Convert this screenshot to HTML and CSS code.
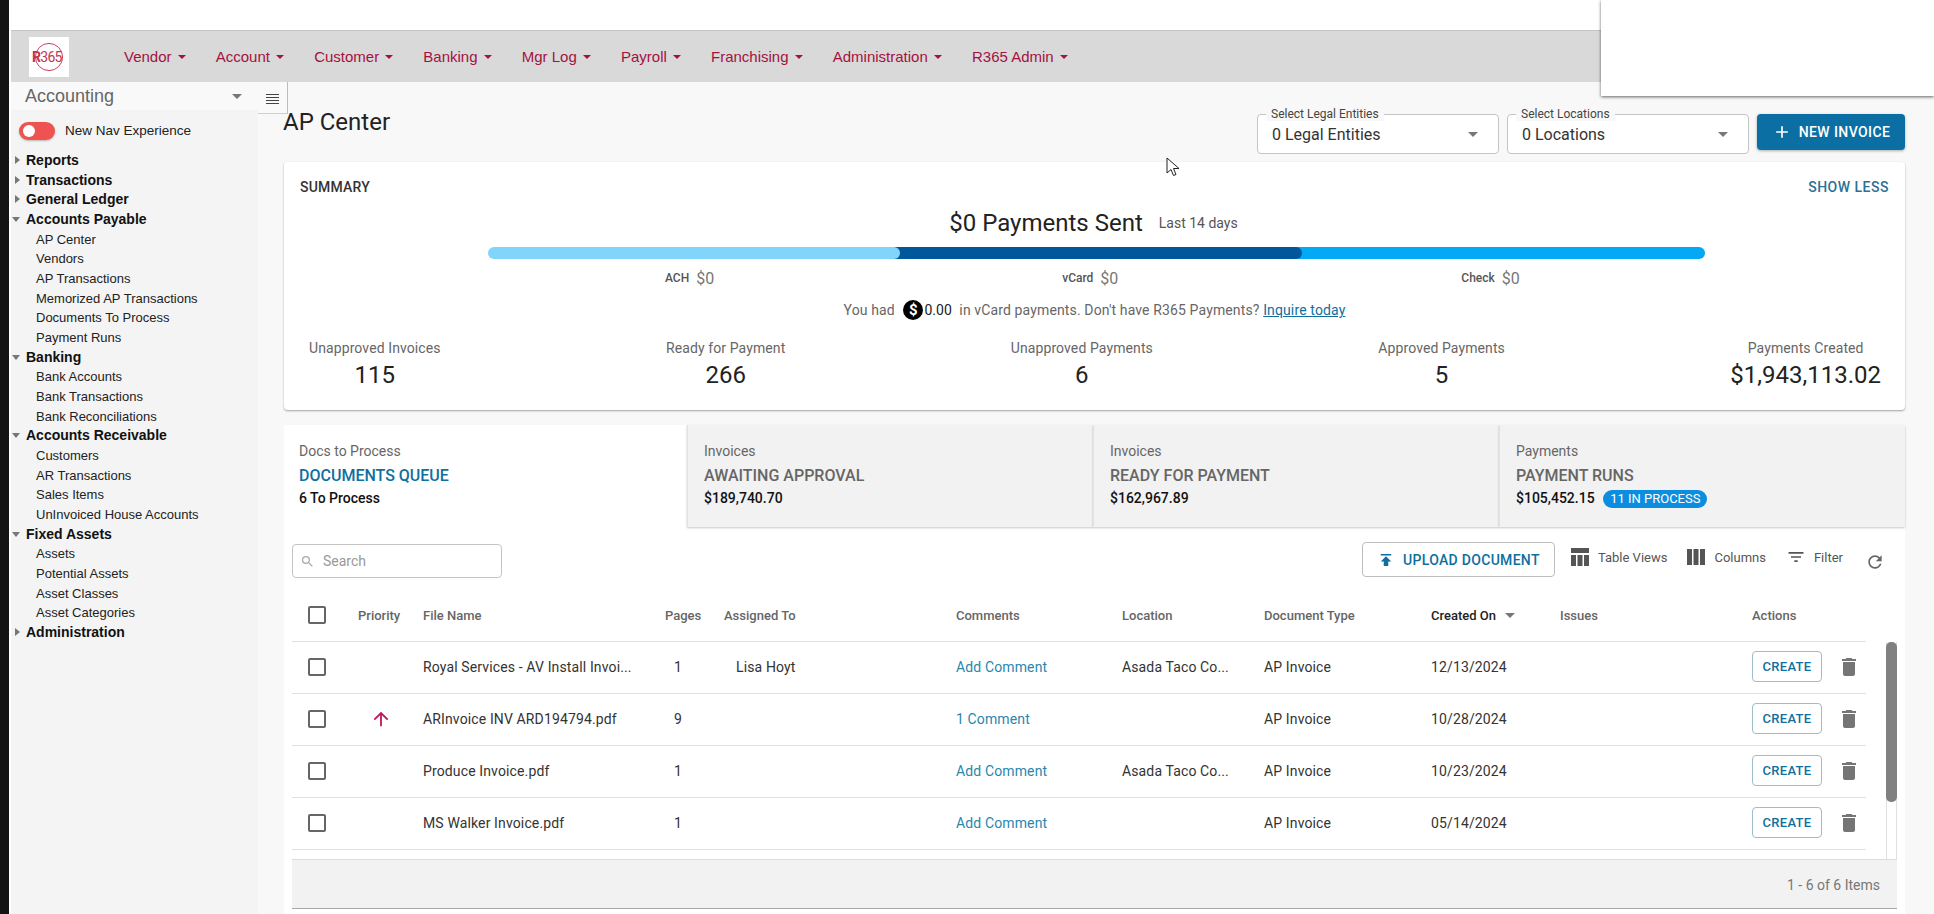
FILE: index.html
```html
<!DOCTYPE html>
<html lang="en">

<head>
    <meta charset="UTF-8" />
    <meta name="viewport" content="width=device-width, initial-scale=1" />
    <title>AP Center</title>
    <link rel="stylesheet" href="styles.css">
</head>

<body>
    <div class="edge"></div>
    <div class="app">
        <div class="top-strip"></div>
        <nav class="navbar">
            <div class="logo">
                <svg class="logo-ring" viewBox="0 0 32 32"><circle cx="16" cy="16" r="14.5" /></svg>
                <span class="logo-text"><b>R</b>365</span>
            </div>
            <ul class="nav-list">
                <li class="nav-item">Vendor<span class="caret"></span></li>
                <li class="nav-item">Account<span class="caret"></span></li>
                <li class="nav-item">Customer<span class="caret"></span></li>
                <li class="nav-item">Banking<span class="caret"></span></li>
                <li class="nav-item">Mgr Log<span class="caret"></span></li>
                <li class="nav-item">Payroll<span class="caret"></span></li>
                <li class="nav-item">Franchising<span class="caret"></span></li>
                <li class="nav-item">Administration<span class="caret"></span></li>
                <li class="nav-item">R365 Admin<span class="caret"></span></li>
            </ul>
        </nav>

        <div class="layout">
            <aside class="sidebar">
                <div class="module-select">
                    <span>Accounting</span>
                    <span class="caret caret-grey"></span>
                </div>
                <div class="nav-toggle">
                    <span class="toggle-switch"></span>
                    <span>New Nav Experience</span>
                </div>
                <ul class="tree">
                    <li class="tree-head closed">Reports</li>
                    <li class="tree-head closed">Transactions</li>
                    <li class="tree-head closed">General Ledger</li>
                    <li class="tree-head open">Accounts Payable</li>
                    <li class="tree-item">AP Center</li>
                    <li class="tree-item">Vendors</li>
                    <li class="tree-item">AP Transactions</li>
                    <li class="tree-item">Memorized AP Transactions</li>
                    <li class="tree-item">Documents To Process</li>
                    <li class="tree-item">Payment Runs</li>
                    <li class="tree-head open">Banking</li>
                    <li class="tree-item">Bank Accounts</li>
                    <li class="tree-item">Bank Transactions</li>
                    <li class="tree-item">Bank Reconciliations</li>
                    <li class="tree-head open">Accounts Receivable</li>
                    <li class="tree-item">Customers</li>
                    <li class="tree-item">AR Transactions</li>
                    <li class="tree-item">Sales Items</li>
                    <li class="tree-item">UnInvoiced House Accounts</li>
                    <li class="tree-head open">Fixed Assets</li>
                    <li class="tree-item">Assets</li>
                    <li class="tree-item">Potential Assets</li>
                    <li class="tree-item">Asset Classes</li>
                    <li class="tree-item">Asset Categories</li>
                    <li class="tree-head closed">Administration</li>
                </ul>
                <div class="menu-handle">
                    <span class="menu-lines"></span>
                </div>
            </aside>

            <main class="content">
                <header class="page-header">
                    <h1 class="page-title">AP Center</h1>
                    <div class="page-actions">
                        <div class="select-box">
                            <span class="select-label">Select Legal Entities</span>
                            <span>0 Legal Entities</span>
                            <span class="caret caret-grey"></span>
                        </div>
                        <div class="select-box">
                            <span class="select-label">Select Locations</span>
                            <span>0 Locations</span>
                            <span class="caret caret-grey"></span>
                        </div>
                        <button class="btn-primary">
                            <svg class="icon" viewBox="0 0 24 24"><path d="M19 13h-6v6h-2v-6H5v-2h6V5h2v6h6v2z" /></svg>
                            NEW INVOICE
                        </button>
                    </div>
                </header>

                <section class="summary">
                    <div class="summary-top">
                        <span class="summary-title">SUMMARY</span>
                        <span class="show-less">SHOW LESS</span>
                    </div>
                    <div class="sent-line">
                        <span class="sent-total">$0 Payments Sent</span>
                        <span class="sent-range">Last 14 days</span>
                    </div>
                    <div class="pay-bar">
                        <div class="pay-seg seg-ach"></div>
                        <div class="pay-seg seg-vcard"></div>
                        <div class="pay-seg seg-check"></div>
                    </div>
                    <div class="pay-legend">
                        <span class="legend-item legend-ach"><small>ACH</small>$0</span>
                        <span class="legend-item legend-vcard"><small>vCard</small>$0</span>
                        <span class="legend-item legend-check"><small>Check</small>$0</span>
                    </div>
                    <p class="vcard-note">
                        You had
                        <span class="dollar-badge">$</span><span class="vcard-amount">0.00</span>
                        in vCard payments. Don't have R365 Payments? <a class="inquire">Inquire today</a>
                    </p>
                    <div class="stats">
                        <div class="stat">
                            <span class="stat-label">Unapproved Invoices</span>
                            <span class="stat-value">115</span>
                        </div>
                        <div class="stat">
                            <span class="stat-label">Ready for Payment</span>
                            <span class="stat-value">266</span>
                        </div>
                        <div class="stat">
                            <span class="stat-label">Unapproved Payments</span>
                            <span class="stat-value">6</span>
                        </div>
                        <div class="stat">
                            <span class="stat-label">Approved Payments</span>
                            <span class="stat-value">5</span>
                        </div>
                        <div class="stat">
                            <span class="stat-label">Payments Created</span>
                            <span class="stat-value">$1,943,113.02</span>
                        </div>
                    </div>
                </section>

                <section class="panel">
                    <div class="tabs">
                        <div class="tab tab-active tab-docs">
                            <span class="tab-kicker">Docs to Process</span>
                            <span class="tab-name">DOCUMENTS QUEUE</span>
                            <span class="tab-meta">6 To Process</span>
                        </div>
                        <div class="tab tab-wide">
                            <span class="tab-kicker">Invoices</span>
                            <span class="tab-name">AWAITING APPROVAL</span>
                            <span class="tab-meta">$189,740.70</span>
                        </div>
                        <div class="tab tab-wide">
                            <span class="tab-kicker">Invoices</span>
                            <span class="tab-name">READY FOR PAYMENT</span>
                            <span class="tab-meta">$162,967.89</span>
                        </div>
                        <div class="tab tab-last">
                            <span class="tab-kicker">Payments</span>
                            <span class="tab-name">PAYMENT RUNS</span>
                            <span class="tab-meta">$105,452.15 <span class="pill">11 IN PROCESS</span></span>
                        </div>
                    </div>

                    <div class="toolbar">
                        <div class="search-box">
                            <svg class="icon-search" viewBox="0 0 24 24"><path d="M15.5 14h-.79l-.28-.27A6.47 6.47 0 0 0 16 9.5 6.5 6.5 0 1 0 9.5 16c1.61 0 3.09-.59 4.23-1.57l.27.28v.79l5 4.99L20.49 19l-4.99-5zm-6 0C7.01 14 5 11.99 5 9.5S7.01 5 9.5 5 14 7.01 14 9.5 11.99 14 9.5 14z" /></svg>
                            <span>Search</span>
                        </div>
                        <div class="tools">
                            <button class="btn-outline">
                                <svg class="icon" viewBox="0 0 24 24"><path d="M5 4v2h14V4H5zm0 10h4v6h6v-6h4l-7-7-7 7z" /></svg>
                                UPLOAD DOCUMENT
                            </button>
                            <span class="tool tool-views">
                                <svg class="icon-tool" viewBox="0 0 20 20"><path d="M1 1h18v5H1zM1 8h5v11H1zM7.5 8h5v11h-5zM14 8h5v11h-5z" /></svg>
                                Table Views
                            </span>
                            <span class="tool tool-columns">
                                <svg class="icon-tool" viewBox="0 0 20 20"><path d="M1 2h5v16H1zM7.5 2h5v16h-5zM14 2h5v16h-5z" /></svg>
                                Columns
                            </span>
                            <span class="tool tool-filter">
                                <svg class="icon-tool" viewBox="0 0 24 24"><path d="M10 18h4v-2h-4v2zM3 6v2h18V6H3zm3 7h12v-2H6v2z" /></svg>
                                Filter
                            </span>
                            <svg class="icon-refresh" viewBox="0 0 24 24"><path d="M17.65 6.35C16.2 4.9 14.21 4 12 4c-4.42 0-7.99 3.58-7.99 8s3.57 8 7.99 8c3.73 0 6.84-2.55 7.73-6h-2.08c-.82 2.33-3.04 4-5.65 4-3.31 0-6-2.69-6-6s2.69-6 6-6c1.66 0 3.14.69 4.22 1.78L13 11h7V4l-2.35 2.35z" /></svg>
                        </div>
                    </div>

                    <div class="grid-wrap">
                        <div class="grid-head row">
                            <span class="cell-check"><span class="checkbox"></span></span>
                            <span>Priority</span>
                            <span>File Name</span>
                            <span>Pages</span>
                            <span>Assigned To</span>
                            <span>Comments</span>
                            <span>Location</span>
                            <span>Document Type</span>
                            <span class="sorted">Created On<span class="caret caret-grey"></span></span>
                            <span>Issues</span>
                            <span>Actions</span>
                        </div>
                        <div class="grid-body">
                            <div class="rows">
                                <div class="row">
                                    <span class="cell-check"><span class="checkbox"></span></span>
                                    <span></span>
                                    <span>Royal Services - AV Install Invoi...</span>
                                    <span class="cell-pages">1</span>
                                    <span class="cell-person">Lisa Hoyt</span>
                                    <a class="cell-link">Add Comment</a>
                                    <span>Asada Taco Co...</span>
                                    <span>AP Invoice</span>
                                    <span>12/13/2024</span>
                                    <span></span>
                                    <span class="cell-actions">
                                        <button class="btn-create">CREATE</button>
                                        <svg class="icon-trash" viewBox="0 0 24 24"><path d="M6 19c0 1.1.9 2 2 2h8c1.1 0 2-.9 2-2V7H6v12zM19 4h-3.5l-1-1h-5l-1 1H5v2h14V4z" /></svg>
                                    </span>
                                </div>
                                <div class="row">
                                    <span class="cell-check"><span class="checkbox"></span></span>
                                    <span class="cell-priority">
                                        <svg class="icon-priority" viewBox="0 0 24 24"><path d="M4 12l1.41 1.41L11 7.83V20h2V7.83l5.58 5.59L20 12l-8-8-8 8z" /></svg>
                                    </span>
                                    <span>ARInvoice INV ARD194794.pdf</span>
                                    <span class="cell-pages">9</span>
                                    <span></span>
                                    <a class="cell-link">1 Comment</a>
                                    <span></span>
                                    <span>AP Invoice</span>
                                    <span>10/28/2024</span>
                                    <span></span>
                                    <span class="cell-actions">
                                        <button class="btn-create">CREATE</button>
                                        <svg class="icon-trash" viewBox="0 0 24 24"><path d="M6 19c0 1.1.9 2 2 2h8c1.1 0 2-.9 2-2V7H6v12zM19 4h-3.5l-1-1h-5l-1 1H5v2h14V4z" /></svg>
                                    </span>
                                </div>
                                <div class="row">
                                    <span class="cell-check"><span class="checkbox"></span></span>
                                    <span></span>
                                    <span>Produce Invoice.pdf</span>
                                    <span class="cell-pages">1</span>
                                    <span></span>
                                    <a class="cell-link">Add Comment</a>
                                    <span>Asada Taco Co...</span>
                                    <span>AP Invoice</span>
                                    <span>10/23/2024</span>
                                    <span></span>
                                    <span class="cell-actions">
                                        <button class="btn-create">CREATE</button>
                                        <svg class="icon-trash" viewBox="0 0 24 24"><path d="M6 19c0 1.1.9 2 2 2h8c1.1 0 2-.9 2-2V7H6v12zM19 4h-3.5l-1-1h-5l-1 1H5v2h14V4z" /></svg>
                                    </span>
                                </div>
                                <div class="row">
                                    <span class="cell-check"><span class="checkbox"></span></span>
                                    <span></span>
                                    <span>MS Walker Invoice.pdf</span>
                                    <span class="cell-pages">1</span>
                                    <span></span>
                                    <a class="cell-link">Add Comment</a>
                                    <span></span>
                                    <span>AP Invoice</span>
                                    <span>05/14/2024</span>
                                    <span></span>
                                    <span class="cell-actions">
                                        <button class="btn-create">CREATE</button>
                                        <svg class="icon-trash" viewBox="0 0 24 24"><path d="M6 19c0 1.1.9 2 2 2h8c1.1 0 2-.9 2-2V7H6v12zM19 4h-3.5l-1-1h-5l-1 1H5v2h14V4z" /></svg>
                                    </span>
                                </div>
                            </div>
                            <div class="scroll-track"><div class="scroll-thumb"></div></div>
                        </div>
                        <div class="grid-footer">1 - 6 of 6 Items</div>
                    </div>
                </section>
            </main>
        </div>
    </div>

    <div class="popup"></div>
    <svg class="cursor" viewBox="0 0 14 20"><path d="M1 1v15l4-3.5 2.5 6 2.5-1-2.5-6H13z" /></svg>
</body>
</html>
```

FILE: styles.css
```css
:root {
    --burgundy: #a3123f;
    --teal: #0f6f9e;
    --link: #2a87ad;
    --text: #333333;
    --muted: #666666;
    --line: #e0e0e0;
}

* {
    margin: 0;
    padding: 0;
    box-sizing: border-box;
}

html,
body {
    height: 914px;
    overflow: hidden;
}

body {
    display: flex;
    font-family: 'Roboto', sans-serif;
    font-size: 14px;
    color: var(--text);
    background-color: white;
}

ul {
    list-style: none;
}

button {
    font-family: inherit;
    cursor: pointer;
}

.edge {
    width: 11px;
    flex-shrink: 0;
    background-color: #141414;
    border-right: 2px solid white;
}

.app {
    flex: 1;
    min-width: 0;
    display: flex;
    flex-direction: column;
}

.top-strip {
    height: 31px;
    background-color: white;
    border-bottom: 1px solid #c4c4c4;
}

/* top nav */

.navbar {
    height: 51px;
    display: flex;
    align-items: center;
    background-color: #d9d9d9;
}

.logo {
    position: relative;
    width: 40px;
    height: 40px;
    margin-left: 18px;
    background-color: white;
}

.logo-ring {
    position: absolute;
    top: 5px;
    left: 5px;
    width: 30px;
    height: 30px;
    fill: none;
    stroke: #c4344f;
    stroke-width: 1;
}

.logo-text {
    position: absolute;
    top: 12px;
    left: 3px;
    font-size: 14px;
    line-height: 16px;
    letter-spacing: -0.7px;
    color: #c4344f;
}

.nav-list {
    display: flex;
    gap: 30.2px;
    margin-left: 55px;
}

.nav-item {
    display: flex;
    align-items: center;
    gap: 6px;
    font-family: 'Liberation Sans', sans-serif;
    font-size: 15px;
    color: var(--burgundy);
    white-space: nowrap;
}

.caret {
    display: inline-block;
    width: 0;
    height: 0;
    border-left: 4px solid transparent;
    border-right: 4px solid transparent;
    border-top: 4px solid var(--burgundy);
}

.caret-grey {
    border-left-width: 5px;
    border-right-width: 5px;
    border-top: 5px solid #777777;
}

/* sidebar */

.layout {
    flex: 1;
    min-height: 0;
    display: flex;
}

.sidebar {
    position: relative;
    width: 247px;
    flex-shrink: 0;
    font-family: 'Liberation Sans', sans-serif;
    background-color: #f4f4f4;
}

.module-select {
    height: 28px;
    display: flex;
    align-items: center;
    justify-content: space-between;
    padding: 0 16px 0 14px;
    font-size: 18px;
    color: #666666;
    background-color: #f9f9f9;
}

.menu-handle {
    position: absolute;
    top: 0;
    left: 100%;
    width: 30px;
    height: 32px;
    display: flex;
    align-items: center;
    justify-content: center;
    border-right: 1px solid #bdbdbd;
    border-bottom: 1px solid #cfcfcf;
    background-color: #f9f9f9;
}

.menu-lines {
    width: 13px;
    height: 12px;
    margin-top: 4px;
    background: repeating-linear-gradient(to bottom, #444444 0, #444444 1.5px, transparent 1.5px, transparent 3px);
}

.nav-toggle {
    display: flex;
    align-items: center;
    gap: 10px;
    height: 41px;
    padding-left: 8px;
    font-size: 13.5px;
    color: #222222;
}

.toggle-switch {
    position: relative;
    width: 36px;
    height: 18px;
    background-color: #ef5350;
    border-radius: 9px;
    box-shadow: 0 1px 2px rgba(0, 0, 0, 0.25);
}

.toggle-switch::before {
    content: '';
    position: absolute;
    top: 3px;
    left: 4px;
    width: 12px;
    height: 12px;
    border-radius: 50%;
    background-color: white;
}

.tree li {
    height: 19.68px;
    line-height: 19.68px;
    white-space: nowrap;
}

.tree-head {
    position: relative;
    padding-left: 15px;
    font-size: 14px;
    font-weight: 700;
    color: #111111;
}

.tree-head::before {
    content: '';
    position: absolute;
    width: 0;
    height: 0;
}

.tree-head.closed::before {
    border-top: 4.5px solid transparent;
    border-bottom: 4.5px solid transparent;
    border-left: 5px solid #777777;
    left: 4px;
    top: 5px;
}

.tree-head.open::before {
    border-left: 4.5px solid transparent;
    border-right: 4.5px solid transparent;
    border-top: 5px solid #777777;
    left: 1px;
    top: 7px;
}

.tree-item {
    padding-left: 25px;
    font-size: 13px;
    color: #222222;
}

/* main */

.content {
    flex: 1;
    min-width: 0;
    padding: 0 29px 0 26px;
    background-color: #f8f8f8;
}

.page-header {
    height: 80px;
    display: flex;
    justify-content: space-between;
}

.page-title {
    margin: 24px 0 0 -1px;
    font-size: 24px;
    font-weight: 400;
    line-height: 32px;
    color: #222222;
}

.page-actions {
    display: flex;
    gap: 8px;
    padding-top: 32px;
}

.select-box {
    position: relative;
    width: 242px;
    height: 40px;
    display: flex;
    align-items: center;
    justify-content: space-between;
    padding: 0 20px 0 14px;
    font-size: 16px;
    color: #333333;
    background-color: white;
    border: 1px solid #c4c4c4;
    border-radius: 4px;
}

.select-label {
    position: absolute;
    top: -8px;
    left: 8px;
    padding: 0 5px;
    font-size: 12px;
    line-height: 14px;
    color: #444444;
    background-color: #f8f8f8;
}

.btn-primary {
    width: 148px;
    height: 36px;
    display: flex;
    align-items: center;
    justify-content: center;
    gap: 7px;
    font-size: 14px;
    font-weight: 500;
    letter-spacing: 0.4px;
    color: white;
    background-color: #0b6fa4;
    border: none;
    border-radius: 4px;
    box-shadow: 0 1px 3px rgba(0, 0, 0, 0.3);
}

.icon {
    width: 20px;
    height: 20px;
    fill: currentColor;
    flex-shrink: 0;
}

/* summary card */

.summary {
    height: 248px;
    padding: 16px 16px 0 16px;
    background-color: white;
    border-radius: 4px;
    box-shadow: 0 1px 2px rgba(0, 0, 0, 0.35);
}

.summary-top {
    display: flex;
    justify-content: space-between;
    font-size: 14px;
    line-height: 18px;
    font-weight: 500;
    letter-spacing: 0.2px;
}

.summary-title {
    color: #333333;
}

.show-less {
    letter-spacing: 0.5px;
    color: #2c7096;
}

.sent-line {
    display: flex;
    align-items: center;
    justify-content: center;
    gap: 16px;
    margin-top: 11px;
    padding-right: 2px;
    line-height: 32px;
}

.sent-total {
    font-size: 24px;
    color: #222222;
}

.sent-range {
    font-size: 14px;
    color: #555555;
}

.pay-bar {
    position: relative;
    z-index: 0;
    display: flex;
    height: 12px;
    margin: 8px 184px 0 188px;
}

.pay-seg {
    height: 100%;
}

.seg-ach {
    position: relative;
    z-index: 2;
    width: 412px;
    background-color: #81d4fa;
    border-radius: 6px;
}

.seg-vcard {
    position: relative;
    z-index: 1;
    width: 408px;
    margin-left: -6px;
    background-color: #01579b;
    border-radius: 0 6px 6px 0;
}

.seg-check {
    flex: 1;
    margin-left: -6px;
    background-color: #03a9f4;
    border-radius: 0 6px 6px 0;
}

.pay-legend {
    display: flex;
    height: 20px;
    margin-top: 9px;
    font-size: 16px;
    color: #777777;
}

.legend-item {
    display: inline-flex;
    align-items: center;
    gap: 7px;
}

.legend-item small {
    font-size: 12px;
    font-weight: 500;
    color: #555555;
}

.legend-ach {
    margin-left: 365px;
}

.legend-vcard {
    margin-left: 348px;
}

.legend-check {
    margin-left: 343px;
}

.vcard-note {
    margin-top: 12px;
    line-height: 20px;
    font-size: 14px;
    letter-spacing: 0.13px;
    text-align: center;
    color: #666666;
    white-space: nowrap;
}

.dollar-badge {
    display: inline-block;
    width: 20px;
    height: 20px;
    margin-left: 5px;
    font-size: 15px;
    font-weight: 700;
    line-height: 20px;
    vertical-align: top;
    color: white;
    background-color: black;
    border-radius: 50%;
}

.vcard-amount {
    margin: 0 4px 0 1px;
    letter-spacing: 0;
    color: #222222;
}

.inquire {
    color: var(--teal);
    text-decoration: underline;
}

.stats {
    display: flex;
    justify-content: space-between;
    margin-top: 18px;
    padding: 0 8px 0 9px;
}

.stat {
    display: flex;
    flex-direction: column;
    align-items: center;
}

.stat-label {
    line-height: 20px;
    letter-spacing: 0.1px;
    color: #666666;
}

.stat-value {
    margin-top: 1px;
    font-size: 24px;
    line-height: 32px;
    color: #222222;
}

/* tabs and table */

.panel {
    height: 500px;
    margin-top: 15px;
    background-color: white;
    border-radius: 4px 4px 0 0;
}

.tabs {
    height: 102px;
    display: flex;
}

.tab {
    display: flex;
    flex-direction: column;
    padding: 16px 16px 0 16px;
    background-color: #f2f2f2;
    border-left: 1px solid #e2e2e2;
    box-shadow: 0 1px 2px rgba(0, 0, 0, 0.22);
}

.tab-active {
    padding-left: 15px;
    background-color: white;
    border-left: none;
    box-shadow: none;
}

.tab-docs {
    width: 403px;
}

.tab-wide {
    width: 406px;
}

.tab-last {
    flex: 1;
}

.tab-kicker {
    font-size: 14px;
    line-height: 20px;
    color: #666666;
}

.tab-name {
    margin-top: 4px;
    font-size: 16px;
    line-height: 22px;
    font-weight: 500;
    color: #666666;
}

.tab-active .tab-name {
    color: var(--teal);
}

.tab-meta {
    margin-top: 1px;
    font-size: 14px;
    line-height: 20px;
    font-weight: 500;
    color: #111111;
}

.pill {
    display: inline-block;
    margin-left: 5px;
    padding: 0 7px;
    font-size: 13px;
    line-height: 18px;
    font-weight: 400;
    color: white;
    background-color: #0b8de0;
    border-radius: 9px;
}

.toolbar {
    height: 66px;
    display: flex;
    justify-content: space-between;
    padding: 15px 20px 0 8px;
}

.search-box {
    width: 210px;
    height: 34px;
    margin-top: 2px;
    display: flex;
    align-items: center;
    gap: 8px;
    padding-left: 7px;
    font-size: 14px;
    color: #999999;
    border: 1px solid #c4c4c4;
    border-radius: 4px;
}

.icon-search {
    width: 15px;
    height: 15px;
    fill: #aaaaaa;
}

.tools {
    display: flex;
    align-items: flex-start;
}

.btn-outline {
    width: 193px;
    height: 35px;
    display: flex;
    align-items: center;
    justify-content: center;
    gap: 8px;
    font-size: 14px;
    font-weight: 500;
    letter-spacing: 0.3px;
    color: var(--teal);
    background-color: white;
    border: 1px solid #bdbdbd;
    border-radius: 4px;
}

.btn-outline .icon {
    width: 18px;
    height: 18px;
}

.tool {
    display: flex;
    align-items: center;
    gap: 8px;
    height: 30px;
    font-size: 13px;
    color: #555555;
}

.tool-views {
    margin-left: 15px;
}

.tool-columns {
    margin-left: 19px;
}

.tool-filter {
    margin-left: 20px;
}

.icon-tool {
    width: 20px;
    height: 20px;
    fill: #555555;
}

.icon-refresh {
    width: 20px;
    height: 20px;
    margin: 10px 0 0 22px;
    fill: #666666;
}

.grid-wrap {
    margin: 0 8px;
}

.row {
    display: grid;
    grid-template-columns: 66px 65px 242px 59px 232px 166px 142px 167px 129px 192px 114px;
    align-items: center;
    width: 1574px;
    height: 52px;
    padding-bottom: 1px;
    letter-spacing: 0.13px;
    border-bottom: 1px solid var(--line);
}

.grid-head {
    height: 49px;
    padding-bottom: 4px;
    font-size: 13px;
    font-weight: 500;
    letter-spacing: 0;
    color: #666666;
}

.sorted {
    display: flex;
    align-items: center;
    gap: 9px;
    color: #222222;
}

.cell-check {
    display: flex;
    padding-left: 16px;
}

.checkbox {
    width: 18px;
    height: 18px;
    border: 2px solid #666666;
    border-radius: 2px;
}

.cell-pages {
    padding-left: 9px;
}

.cell-person {
    padding-left: 12px;
}

.cell-priority {
    display: flex;
    padding-left: 12px;
}

.icon-priority {
    width: 22px;
    height: 22px;
    fill: #c2185b;
}

.cell-link {
    color: var(--link);
}

.cell-actions {
    display: flex;
    align-items: center;
    gap: 18px;
}

.btn-create {
    width: 70px;
    height: 31px;
    margin-top: -1px;
    font-size: 13px;
    font-weight: 500;
    letter-spacing: 0.3px;
    color: var(--teal);
    background-color: white;
    border: 1px solid #9fbccb;
    border-radius: 4px;
}

.icon-trash {
    width: 24px;
    height: 24px;
    margin-left: -3px;
    fill: #757575;
}

.grid-body {
    display: flex;
    height: 217px;
    overflow: hidden;
    position: relative;
}

.rows {
    flex-shrink: 0;
}

.scroll-track {
    width: 11px;
    margin-left: 20px;
    border-left: 1px solid var(--line);
    border-right: 1px solid var(--line);
}

.scroll-thumb {
    width: 11px;
    height: 160px;
    margin-left: -1px;
    background-color: #808080;
    border-radius: 5px;
}

.grid-footer {
    width: 1605px;
    height: 50px;
    padding-right: 17px;
    font-size: 14px;
    line-height: 50px;
    text-align: right;
    color: #777777;
    background-color: #f2f2f2;
    border-top: 1px solid #dcdcdc;
    border-bottom: 1px solid #a8a8a8;
}

/* things lying over the page */

.popup {
    position: absolute;
    top: 0;
    right: 0;
    width: 333px;
    height: 96px;
    background-color: white;
    box-shadow: 0 1px 3px rgba(0, 0, 0, 0.6);
}

.cursor {
    position: absolute;
    top: 157px;
    left: 1166px;
    width: 14px;
    height: 20px;
    fill: white;
    stroke: #222222;
    stroke-width: 1;
}
```
